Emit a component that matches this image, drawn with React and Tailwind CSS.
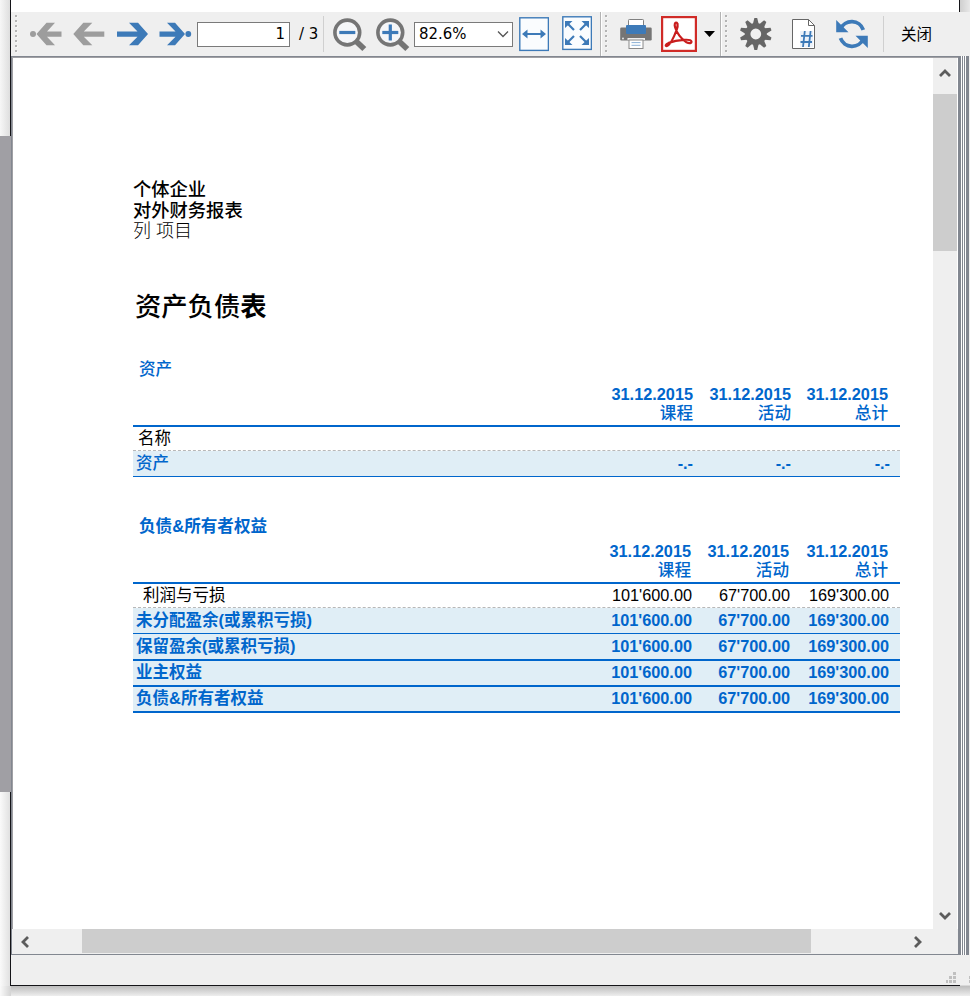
const BLUE = "#3d7ab8";

function Icon({ x, w, className, children }) {
  return (
    <svg
      className={`h-[44px] shrink-0 ${className}`}
      width={w}
      height="44"
      viewBox={`${x} 12 ${w} 44`}
      fill="none"
    >
      {children}
    </svg>
  );
}

function Grip({ className }) {
  const dots = [15, 20, 25, 30, 35, 40, 45, 50];
  return (
    <svg className={`shrink-0 ${className}`} width="3" height="44" viewBox="0 12 3 44">
      {dots.map((y) => (
        <g key={y}>
          <rect x="1" y={y + 1} width="1.5" height="1.5" fill="#fff" />
          <rect x="0" y={y} width="2" height="2" fill="#b4b4b4" />
        </g>
      ))}
    </svg>
  );
}

function Arrow({ left, color, tip }) {
  return (
    <g fill={color} transform={left ? `translate(${2 * tip} 0) scale(-1 1)` : undefined}>
      <path d={`M${tip - 31} 31.4H${tip - 10.5}L${tip - 19} 22.8H${tip - 10}L${tip} 34L${tip - 10} 45.2H${tip - 19}L${tip - 10.5} 36.8H${tip - 31}Z`} />
    </g>
  );
}

function Magnifier({ cx, plus }) {
  return (
    <>
      <circle cx={cx} cy="32.5" r="12.4" fill="#f5f6f8" stroke="#757575" strokeWidth="3.6" />
      <path d={`M${cx + 9} 41.5l8 7.5`} stroke="#757575" strokeWidth="5.8" />
      <path d={`M${cx - 8} 32.5h16`} stroke={BLUE} strokeWidth="3.2" />
      {plus && <path d={`M${cx} 24.5v16`} stroke={BLUE} strokeWidth="3.2" />}
    </>
  );
}

function Toolbar() {
  const teeth = [0, 36, 72, 108, 144, 180, 216, 252, 288, 324];
  return (
    <div className="flex h-[44px] w-full items-center bg-[#efefef] font-['DejaVu_Sans_Condensed','DejaVu_Sans','Noto_Sans_CJK_SC',sans-serif] text-[16.6px] text-black">
      <Grip className="ml-1" />
      <Icon x={30} w={32} className="ml-3">
        <circle cx="33" cy="34" r="3" fill="#9d9d9d" />
        <path fill="#9d9d9d" d="M36.5 34L46.5 22.8H55L47 31.4H61.5V36.8H47L55 45.2H46.5Z" />
      </Icon>
      <Icon x={73} w={32} className="ml-[11px]">
        <Arrow left tip={73.3} color="#9d9d9d" />
      </Icon>
      <Icon x={117} w={32} className="ml-3">
        <Arrow tip={148} color={BLUE} />
      </Icon>
      <Icon x={159} w={33} className="ml-[10px]">
        <path fill={BLUE} d="M159.5 31.4H175.5L167 22.8H175L185 34L175 45.2H167L175.5 36.8H159.5Z" />
        <circle cx="188.3" cy="34" r="2.9" fill={BLUE} />
      </Icon>
      <div className="ml-[5px] flex h-[25px] w-[93px] items-center justify-end border border-[#7a7a7a] bg-white pr-[4px] pt-px">1</div>
      <div className="ml-[9px] w-[24px] whitespace-nowrap pt-px">/ 3</div>
      <div className="h-[36px] w-px bg-[#d0d0d0]" />
      <Icon x={333} w={34} className="ml-[9px]">
        <Magnifier cx={347.3} />
      </Icon>
      <Icon x={376} w={34} className="ml-[9px]">
        <Magnifier cx={390.3} plus />
      </Icon>
      <div className="ml-1 flex h-[25px] w-[99px] items-center justify-between border border-[#7a7a7a] bg-white pl-1 pr-[3px]">
        <span className="pt-px">82.6%</span>
        <svg width="12" height="8" viewBox="0 0 12 8" fill="none" stroke="#555" strokeWidth="1.3">
          <path d="M1 1.5l5 5 5-5" />
        </svg>
      </div>
      <Icon x={519} w={30} className="ml-[6px]">
        <rect x="519.8" y="17.8" width="28.6" height="32.6" fill="#fafcfe" stroke={BLUE} strokeWidth="1.4" />
        <path d="M525 34h18" stroke={BLUE} strokeWidth="2" />
        <path d="M522 34l5.5-4.5v9zM546 34l-5.5-4.5v9z" fill={BLUE} />
      </Icon>
      <Icon x={562} w={30} className="ml-[13px]">
        <rect x="562.8" y="16.8" width="28.6" height="32.6" fill="#fafcfe" stroke={BLUE} strokeWidth="1.4" />
        <path d="M567.5 23.5l6.5 6.5M586.5 23.5L580 30M567.5 42.5l6.5-6.5M586.5 42.5L580 36" stroke={BLUE} strokeWidth="2.2" />
        <path d="M565 21h7.5l-7.5 7zM589 21h-7.5l7.5 7zM565 45h7.5l-7.5-7zM589 45h-7.5l7.5-7z" fill={BLUE} />
      </Icon>
      <div className="ml-2 h-[44px] w-[2px] border-l border-[#b4b4b4] bg-white" />
      <Grip className="ml-[3px]" />
      <Icon x={620} w={32} className="ml-3">
        <rect x="620.2" y="27.5" width="31.5" height="13" rx="1.2" fill="#757575" />
        <rect x="628.5" y="19.5" width="15" height="9" rx="0.8" fill="#fff" stroke="#808080" />
        <rect x="626" y="25" width="20" height="9" rx="1" fill={BLUE} />
        <rect x="627.5" y="38" width="17.5" height="2" fill="#efefef" />
        <rect x="629" y="40" width="14" height="8.5" fill="#fff" stroke="#8a8a8a" />
        <path d="M631.5 42.6h9M631.5 45.3h9" stroke="#6e9ccc" strokeWidth="0.8" />
        <circle cx="623" cy="38.5" r="0.9" fill="#eee" />
      </Icon>
      <Icon x={661} w={36} className="ml-[9px]">
        <rect x="662.1" y="17.1" width="33.8" height="33.8" fill="#fff" stroke="#d02b27" strokeWidth="2.2" />
        <path
          d="M676.8 22.8c-2.1-.8-2.5 1.8-1.7 4.5 1.3 5.1 6.4 12.3 11.3 15 3.2 1.6 5.6.9 5-1-.6-1.6-4-1.7-7.5-1.4-5.3.4-11.3 1.6-15.2 3-3.5 1.4-3.7 3.5-1.6 3.1 2.2-.5 4.8-5.2 7-9.9 2.7-5.6 4.5-12.2 2.7-13.3Z"
          stroke="#c91d1d"
          strokeWidth="2.2"
        />
      </Icon>
      <Icon x={704} w={11} className="ml-[7px]">
        <path d="M704 31h11l-5.5 6z" fill="#000" />
      </Icon>
      <div className="ml-[5px] h-[44px] w-[2px] border-l border-[#b4b4b4] bg-white" />
      <Grip className="ml-[3px]" />
      <Icon x={740} w={32} className="ml-3">
        {teeth.map((a) => (
          <path key={a} d="M752.9 24l1.5-6h2.8l1.5 6z" fill="#666" transform={`rotate(${a} 755.8 34)`} />
        ))}
        <circle cx="755.8" cy="34" r="8.2" stroke="#666" strokeWidth="5.6" />
      </Icon>
      <Icon x={792} w={23} className="ml-5">
        <path d="M792.5 19.5h16l6 6v23h-22z" fill="#fff" stroke="#666" />
        <path d="M808.5 19.5v6h6" stroke="#666" />
        <rect x="800" y="31" width="13" height="16" fill="#edf2f9" />
        <path d="M804.8 31l-1.8 16M810.6 31l-1.8 16M801 35.8h11.5M800.5 42h11.5" stroke={BLUE} strokeWidth="1.8" />
      </Icon>
      <Icon x={836} w={32} className="ml-[21px]">
        <path d="M840.5 29a12.3 12.3 0 0 1 22.8 .8M863.3 39a12.3 12.3 0 0 1-22.8-.8" stroke={BLUE} strokeWidth="3.8" />
        <path d="M836.2 20v12.3h12.3zM867.8 48V35.7h-12.3z" fill={BLUE} />
      </Icon>
      <div className="ml-[15px] h-[36px] w-px bg-[#d0d0d0]" />
      <div className="ml-[17px] whitespace-nowrap pt-[3px] text-[15.5px]">关闭</div>
    </div>
  );
}

function Chevron({ d }) {
  return (
    <svg width="12" height="12" viewBox="0 0 12 12" fill="none" stroke="#5c5c5c" strokeWidth="2.8">
      <path d={d} />
    </svg>
  );
}

function TableHead({ cols }) {
  return (
    <div className={`grid h-[43px] border-b-2 border-[#0066cc] text-right font-bold leading-[20px] text-[#0066cc] ${cols}`}>
      {["课程", "活动", "总计"].map((label) => (
        <div key={label}>
          <div>31.12.2015</div>
          <div className="text-[16.6px] font-medium">{label}</div>
        </div>
      ))}
    </div>
  );
}

function Row({ label, values, className }) {
  return (
    <div className={`grid grid-cols-[1fr_98px_99px] text-right ${className}`}>
      <div className="flex justify-between">
        <span className="text-[16.5px]">{label}</span>
        <span>{values[0]}</span>
      </div>
      <div>{values[1]}</div>
      <div>{values[2]}</div>
    </div>
  );
}

const AMOUNTS = ["101'600.00", "67'700.00", "169'300.00"];

function Report() {
  return (
    <div className="w-[920px] bg-white pl-[120px] pr-[33px] pt-[121px] font-['Liberation_Sans','Noto_Sans_CJK_SC',sans-serif] text-[16.3px] text-black">
      <div className="h-[21px] text-[18.3px] font-medium leading-[21px]">个体企业</div>
      <div className="h-[21px] text-[18.3px] font-medium leading-[21px]">对外财务报表</div>
      <div className="h-[21px] text-[18px] font-light leading-[21px]">列 项目</div>
      <div className="mt-[48px] h-[34px] pl-[2px] text-[26.3px] font-medium leading-[34px]">
        资产负债<span className="font-bold">表</span>
      </div>
      <div className="mt-[36px] h-[20px] pl-[6px] text-[16.6px] font-medium leading-[20px] text-[#0066cc]">资产</div>
      <div className="pt-[4px]">
        <TableHead cols="grid-cols-[1fr_98px_97px] pr-[12px]" />
        <Row label="名称" values={["", "", ""]} className="h-[24px] border-b border-dashed border-[#b8b8b8] pl-[5px] pr-[11px] leading-[22px]" />
        <Row
          label={<span className="font-medium">资产</span>}
          values={["-.-", "-.-", "-.-"]}
          className="h-[26px] border-b border-[#0066cc] bg-[#e0eef6] pl-[3px] pr-[10px] font-bold leading-[25px] text-[#0066cc]"
        />
      </div>
      <div className="mt-[40px] h-[20px] pl-[6px] text-[16.6px] font-bold leading-[20px] text-[#0066cc]">负债&amp;所有者权益</div>
      <div className="pt-[4px]">
        <TableHead cols="grid-cols-[1fr_98px_99px] pr-[12px]" />
        <Row label="利润与亏损" values={AMOUNTS} className="h-[24px] border-b border-dashed border-[#b8b8b8] pl-[10px] pr-[11px] leading-[22px]" />
        <Row label="未分配盈余(或累积亏损)" values={AMOUNTS} className="h-[26px] border-b border-[#0066cc] bg-[#e0eef6] pl-[3px] pr-[11px] font-bold leading-[25px] text-[#0066cc]" />
        <Row label="保留盈余(或累积亏损)" values={AMOUNTS} className="h-[27px] border-b-2 border-[#0066cc] bg-[#e0eef6] pl-[3px] pr-[11px] font-bold leading-[25px] text-[#0066cc]" />
        <Row label="业主权益" values={AMOUNTS} className="h-[26px] border-b-2 border-[#0066cc] bg-[#e0eef6] pl-[3px] pr-[11px] font-bold leading-[23px] text-[#0066cc]" />
        <Row label="负债&所有者权益" values={AMOUNTS} className="h-[26px] border-b-2 border-[#0066cc] bg-[#e0eef6] pl-[3px] pr-[11px] font-bold leading-[23px] text-[#0066cc]" />
      </div>
    </div>
  );
}

export default function App() {
  return (
    <div className="flex h-[996px] w-[970px] overflow-hidden bg-[#f4f4f4]">
      <div className="flex w-[11px] shrink-0 flex-col">
        <div className="h-[136px] border-r border-[#141418] bg-gradient-to-r from-[#f7f7f7] to-[#dedede]" />
        <div className="h-[656px] bg-[#a09fa4]" />
        <div className="flex h-[194px] justify-end bg-gradient-to-r from-[#fafafa] to-[#dedede]">
          <div className="w-px bg-[#141418]" />
        </div>
        <div className="h-[10px] bg-gradient-to-r from-[#fafafa] to-[#d4d4d4]" />
      </div>
      <div className="flex w-[959px] shrink-0 flex-col">
        <div className="flex h-[12px]">
          <div className="w-[948px] bg-white" />
          <div className="w-px bg-[#141418]" />
          <div className="w-[10px] bg-gradient-to-r from-[#cfcfcf] to-[#e8e8e8]" />
        </div>
        <Toolbar />
        <div className="flex h-[899px]">
          <div className="flex w-[947px] flex-col border-l border-t border-[#828790]">
            <div className="flex h-[872px] border-l border-t border-[#a0a0a4]">
              <Report />
              <div className="flex w-[25px] flex-col items-center border-r border-white bg-[#efefef]">
                <div className="flex h-[36px] items-center pb-[6px]">
                  <Chevron d="M1 9l5-5 5 5" />
                </div>
                <div className="h-[157px] w-full bg-[#cdcdcd]" />
                <div className="flex flex-1 items-end pb-[7px]">
                  <Chevron d="M1 3l5 5 5-5" />
                </div>
              </div>
            </div>
            <div className="flex h-[25px] items-center bg-[#efefef]">
              <div className="ml-[7px] flex w-[63px]">
                <Chevron d="M9 1L4 6l5 5" />
              </div>
              <div className="mb-px h-[24px] w-[729px] bg-[#cdcdcd]" />
              <div className="ml-[101px]">
                <Chevron d="M3 1l5 5-5 5" />
              </div>
            </div>
            <div className="h-px bg-[#828790]" />
          </div>
          <div className="flex flex-1 bg-[#efefef]">
            <div className="w-[3px] bg-[#828790]" />
            <div className="w-px bg-white" />
            <div className="w-px bg-[#828790]" />
            <div className="w-px bg-white" />
            <div className="w-px bg-[#828790]" />
            <div className="w-px bg-white" />
            <div className="w-[3px] bg-[#828790]" />
          </div>
        </div>
        <div className="flex h-[30px] items-end bg-[#efefef] pb-[2px] pl-[935px]">
          <svg width="24" height="12" viewBox="0 0 24 12" fill="#c0c0c0">
            <path d="M0 9h2v3H0zM3 9h3v3H3zM7 9h3v3H7zM3 5h3v3H3zM7 5h3v3H7zM7 1h3v3H7zM23 5h1v3h-1zM23 9h1v3h-1z" />
          </svg>
        </div>
        <div className="flex h-px bg-[#d8d8d8]">
          <div className="w-[949px] bg-[#141418]" />
        </div>
        <div className="h-[10px] bg-gradient-to-b from-[#bdbdbd] to-[#eeeeee]" />
      </div>
    </div>
  );
}
